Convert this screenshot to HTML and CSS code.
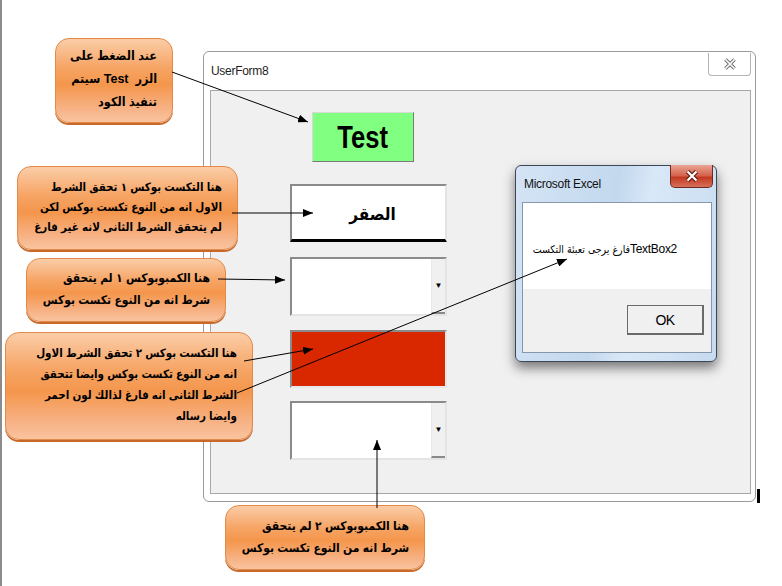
FILE: index.html
```html
<!DOCTYPE html>
<html lang="ar">
<head>
  <meta charset="UTF-8">
  <title>UserForm8</title>
  <link rel="stylesheet" href="styles.css">
</head>
<body>
  <div class="canvas">

    <div class="userform">
      <div class="uf-title">
        <span>UserForm8</span>
        <div class="uf-close">
          <svg width="14" height="12" viewBox="0 0 14 12"><path d="M2.5 1.5 L11.5 10.5 M11.5 1.5 L2.5 10.5" fill="none" stroke="#707070" stroke-width="3.6"/><path d="M2.5 1.5 L11.5 10.5 M11.5 1.5 L2.5 10.5" fill="none" stroke="#fff" stroke-width="1.6"/></svg>
        </div>
      </div>
      <div class="uf-client">
        <div class="uf-controls">
          <div class="btn-test"><span>Test</span></div>
          <div class="box textbox filled">الصقر</div>
          <div class="box combo"><span class="drop">&#9660;</span></div>
          <div class="box textbox empty"></div>
          <div class="box combo"><span class="drop">&#9660;</span></div>
        </div>
      </div>
    </div>

    <div class="msgbox">
      <div class="mb-title">
        <span>Microsoft Excel</span>
        <div class="mb-close">
          <svg width="14" height="12" viewBox="0 0 14 12"><path d="M2.5 1.5 L11.5 10.5 M11.5 1.5 L2.5 10.5" fill="none" stroke="#5a1c12" stroke-width="4.4"/><path d="M2.5 1.5 L11.5 10.5 M11.5 1.5 L2.5 10.5" fill="none" stroke="#fff" stroke-width="2.2"/></svg>
        </div>
      </div>
      <div class="mb-client">
        <div class="mb-text" dir="rtl">TextBox2<b>فارغ يرجى تعبئة التكست</b></div>
        <div class="mb-buttons">
          <div class="btn-ok">OK</div>
        </div>
      </div>
    </div>

    <div class="callout c1" dir="rtl">عند الضغط على<br>الزر&nbsp; Test سيتم<br>تنفيذ الكود</div>
    <div class="callout c2" dir="rtl">هنا التكست بوكس ١ تحقق الشرط<br>الاول انه من النوع تكست بوكس لكن<br>لم يتحقق الشرط الثانى لانه غير فارغ</div>
    <div class="callout c3" dir="rtl">هنا الكمبوبوكس ١ لم يتحقق<br>شرط انه من النوع تكست بوكس</div>
    <div class="callout c4" dir="rtl">هنا التكست بوكس ٢ تحقق الشرط الاول<br>انه من النوع تكست بوكس وايضا تتحقق<br>الشرط الثانى انه فارغ لذالك لون احمر<br>وايضا رساله</div>
    <div class="callout c5" dir="rtl">هنا الكمبوبوكس ٢ لم يتحقق<br>شرط انه من النوع تكست بوكس</div>

    <svg class="arrows" width="782" height="586" viewBox="0 0 782 586">
      <defs>
        <marker id="head" markerWidth="10" markerHeight="8" refX="10" refY="4" orient="auto" markerUnits="userSpaceOnUse">
          <path d="M0 0 L10 4 L0 8 Z" fill="#000"/>
        </marker>
      </defs>
      <g stroke="#000" stroke-width="1" fill="none" marker-end="url(#head)">
        <line x1="172" y1="72" x2="308" y2="122"/>
        <line x1="232" y1="213" x2="313" y2="213"/>
        <line x1="218" y1="279" x2="285" y2="280"/>
        <line x1="244" y1="361" x2="313" y2="349"/>
        <line x1="237" y1="393" x2="567" y2="259"/>
        <line x1="377" y1="508" x2="377" y2="440"/>
      </g>
    </svg>

    <div class="cursor-bar"></div>
  </div>
</body>
</html>
```

FILE: styles.css
```css
body {
  margin: 0;
  background: #fff;
  font-family: "Liberation Sans", "DejaVu Sans Condensed", "DejaVu Sans", sans-serif;
}
.canvas {
  position: relative;
  width: 780px;
  height: 586px;
  border-left: 2px solid #8c8c8c;
  overflow: hidden;
}

/* user form window */
.userform {
  position: absolute;
  left: 201px;
  top: 51px;
  width: 551px;
  height: 449px;
  display: flex;
  flex-direction: column;
  background: #fff;
  border: 1px solid #9a9a9a;
  border-radius: 6px;
}
.uf-title {
  position: relative;
  height: 38px;
  display: flex;
  align-items: center;
  padding-left: 7px;
  font-size: 12px;
  letter-spacing: -0.3px;
  color: #1e1e1e;
}
.uf-close {
  position: absolute;
  right: 4px;
  top: 1px;
  width: 41px;
  height: 22px;
  border: 1px solid #b5b5b5;
  border-top: none;
  border-radius: 0 0 4px 4px;
  display: flex;
  align-items: center;
  justify-content: center;
}
.uf-client {
  flex: 1;
  margin: 0 4px 7px 6px;
  background: #f0f0f0;
  border: 1px solid #a8a8a8;
  padding: 21px 0 0 79px;
}
.uf-controls {
  width: 157px;
  display: flex;
  flex-direction: column;
}
.btn-test {
  width: 100px;
  height: 48px;
  margin-left: 22px;
  background: #80ff80;
  border: 1px solid #d8d8d8;
  border-right-color: #7a7a7a;
  border-bottom-color: #7a7a7a;
  display: flex;
  align-items: center;
  justify-content: center;
  font-size: 32px;
  font-weight: bold;
}
.btn-test span {
  display: inline-block;
  transform: scaleX(0.8);
}
.box {
  box-sizing: border-box;
  height: 58px;
  background: #fff;
  border: 2px solid #8a8a8a;
  border-right-color: #e4e4e4;
  border-bottom-color: #e4e4e4;
  position: relative;
}
.textbox.filled {
  margin-top: 22px;
  border-bottom: 3px solid #000;
  display: flex;
  align-items: center;
  justify-content: center;
  font-family: "DejaVu Sans Condensed", "DejaVu Sans", sans-serif;
  font-weight: bold;
  font-size: 17px;
  padding: 2px 0 0 8px;
}
.combo { margin-top: 15px; height: 59px; }
.textbox.empty {
  margin-top: 14px;
  background: #d92800;
  border-right-color: #e8e8e8;
  border-bottom-color: #e8e8e8;
}
.combo + .textbox + .combo { margin-top: 13px; }
.drop {
  position: absolute;
  right: 0;
  top: 0;
  bottom: 0;
  width: 14px;
  background: #f0f0f0;
  border-left: 1px solid #e8e8e8;
  border-bottom: 2px solid #8a8a8a;
  box-sizing: border-box;
  display: flex;
  align-items: center;
  justify-content: center;
  font-size: 8px;
  color: #000;
}

/* message box window */
.msgbox {
  position: absolute;
  left: 513px;
  top: 165px;
  width: 200px;
  height: 195px;
  border: 1px solid #3b4656;
  border-radius: 6px;
  background: linear-gradient(100deg, #d4e4f5 0%, #c3d8ee 45%, #d9e8f7 60%, #c6dbf0 100%);
  box-shadow: 0 6px 12px rgba(0, 0, 0, 0.5);
  display: flex;
  flex-direction: column;
}
.mb-title {
  position: relative;
  height: 36px;
  display: flex;
  align-items: center;
  padding-left: 8px;
  font-size: 12px;
  letter-spacing: -0.3px;
  color: #111;
}
.mb-close {
  position: absolute;
  right: 3px;
  top: -1px;
  width: 41px;
  height: 22px;
  border: 1px solid #6b2b22;
  border-top: none;
  border-radius: 0 0 5px 5px;
  background: linear-gradient(#e9a596 0%, #d4604a 50%, #c2381f 55%, #d8705a 100%);
  display: flex;
  align-items: center;
  justify-content: center;
}
.mb-client {
  flex: 1;
  margin: 0 4px 8px 6px;
  border: 1px solid #8797ab;
  background: #f0f0f0;
  display: flex;
  flex-direction: column;
}
.mb-text {
  height: 86px;
  background: #fff;
  display: flex;
  align-items: center;
  padding-right: 34px;
  padding-top: 6px;
  box-sizing: border-box;
  white-space: nowrap;
  font-size: 12px;
  letter-spacing: -0.3px;
}
.mb-text b {
  font-family: "DejaVu Sans Condensed", "DejaVu Sans", sans-serif;
  font-weight: normal;
  font-size: 10.5px;
  letter-spacing: 0;
}
.mb-buttons {
  flex: 1;
  display: flex;
  justify-content: flex-end;
  padding: 16px 7px 0 0;
}
.btn-ok {
  width: 77px;
  height: 30px;
  box-sizing: border-box;
  border: 1px solid #6a6a6a;
  border-bottom-width: 2px;
  border-right-width: 2px;
  background: #f0f0f0;
  display: flex;
  align-items: center;
  justify-content: center;
  font-size: 14px;
  letter-spacing: -0.5px;
}

/* annotation callouts */
.callout {
  position: absolute;
  box-sizing: border-box;
  display: flex;
  align-items: center;
  padding: 0 15px 2px 6px;
  border: 1px solid #e38a48;
  border-radius: 14px;
  background: linear-gradient(#fbcda8 0%, #f6a464 35%, #f4964c 55%, #f7b387 85%, #f9c49f 100%);
  box-shadow: 0 2px 0 #c7692a;
  font-family: "Liberation Sans", "DejaVu Sans Condensed", sans-serif;
  font-weight: bold;
  font-size: 11.5px;
  line-height: 21px;
  white-space: nowrap;
  color: #000;
}
.c1 { left: 53px; top: 38px; width: 118px; height: 85px; line-height: 23px; font-size: 12.5px; }
.c2 { left: 15px; top: 166px; width: 221px; height: 84px; line-height: 20px; }
.c3 { left: 24px; top: 258px; width: 200px; height: 64px; line-height: 22px; font-size: 12px; }
.c4 { left: 3px; top: 332px; width: 248px; height: 108px; }
.c5 { left: 223px; top: 505px; width: 200px; height: 65px; line-height: 22px; font-size: 12px; }

.arrows {
  position: absolute;
  left: -2px;
  top: 0;
  pointer-events: none;
}
.cursor-bar {
  position: absolute;
  left: 755px;
  top: 489px;
  width: 3px;
  height: 14px;
  background: #000;
}
```
